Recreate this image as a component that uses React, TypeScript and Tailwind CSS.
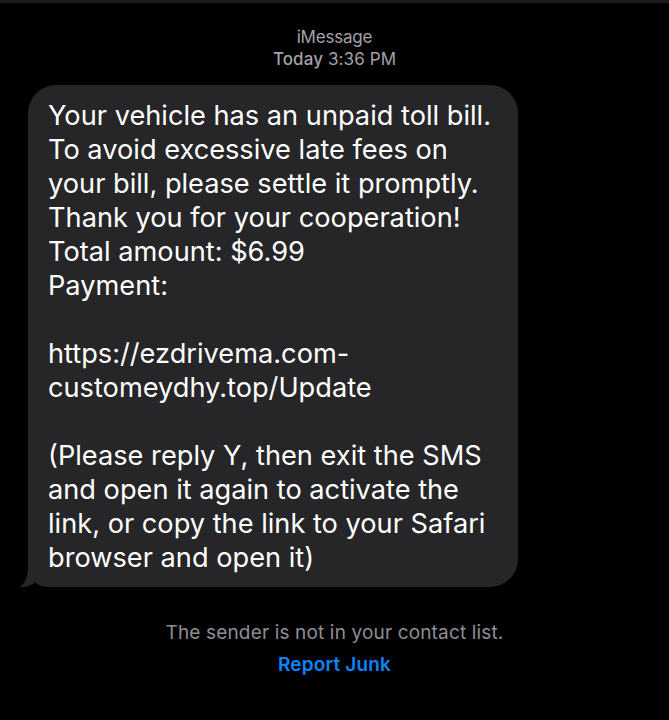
import React from "react";

const lines1 = [
  "Your vehicle has an unpaid toll bill.",
  "To avoid excessive late fees on",
  "your bill, please settle it promptly.",
  "Thank you for your cooperation!",
  "Total amount: $6.99",
  "Payment:",
  "",
  "https://ezdrivema.com-",
  "customeydhy.top/Update",
  "",
  "(Please reply Y, then exit the SMS",
  "and open it again to activate the",
  "link, or copy the link to your Safari",
  "browser and open it)",
];

export default function App() {
  return (
    <div
      className="w-[669px] h-[720px] bg-black flex flex-col"
      style={{ fontFamily: "Inter, 'Noto Sans', sans-serif" }}
    >
      <div className="h-[3px] bg-[#1c1c1e]" />
      <div className="flex flex-col items-center pt-[23px] text-[#a3a3a8] text-[17px] leading-[22px]">
        <div className="tracking-[-0.2px]">iMessage</div>
        <div className="tracking-[0.1px]">
          <span className="font-medium">Today</span> 3:36 PM
        </div>
      </div>
      <div className="pl-[28px] pt-[15px]">
        <div className="relative w-[490px] bg-[#262628] rounded-[28px] rounded-bl-[24px] pl-[20px] pr-[12px] pt-[14px] pb-[12px] text-white text-[27.2px] leading-[34px]">
          <svg
            className="absolute left-[-10px] bottom-0"
            width="34"
            height="27"
            viewBox="18 560 34 27"
          >
            <path
              d="M28 560 L28 565 C28 577 25 584 19 587 C26 587.5 31 586 35 582 C38 585.5 42 587 52 587 L52 560 Z"
              fill="#262628"
            />
          </svg>
          <div className="relative">
            {lines1.map((l, i) => (
              <div key={i} className="whitespace-nowrap h-[34px]">
                {l}
              </div>
            ))}
          </div>
        </div>
      </div>
      <div className="flex flex-col items-center pt-[34px] text-[19px] tracking-[0.15px]">
        <div className="text-[#8e8e93] leading-[24px]">
          The sender is not in your contact list.
        </div>
        <div className="text-[#0a84ff] font-semibold leading-[24px] mt-[8px]">
          Report Junk
        </div>
      </div>
    </div>
  );
}
